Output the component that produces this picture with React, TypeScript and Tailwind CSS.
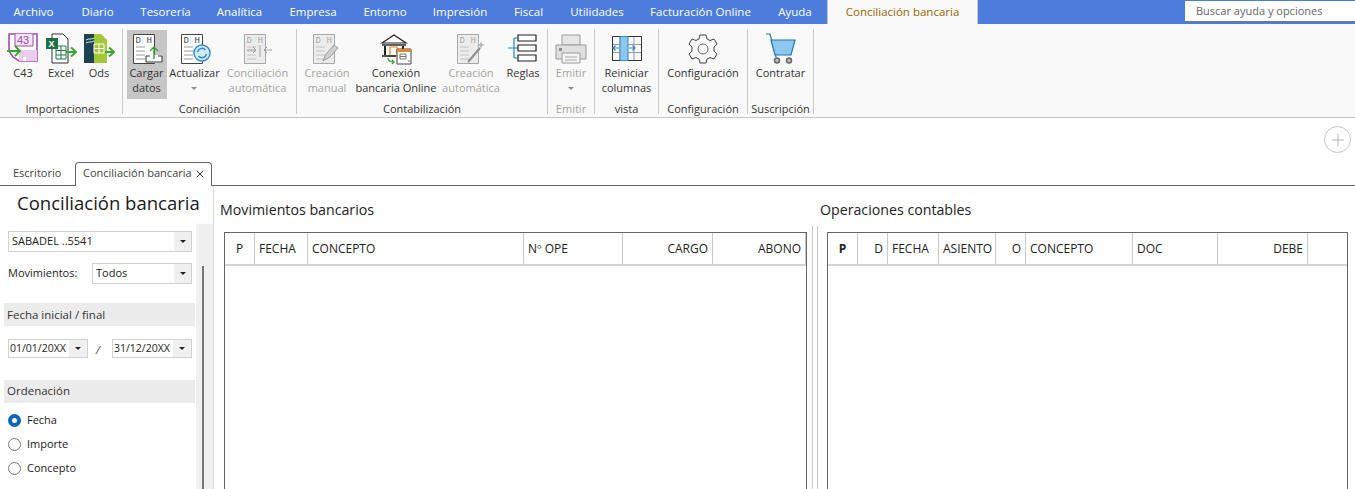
import type { ReactNode } from "react"
import { Plus, X } from "lucide-react"

const menu = [
  { label: "Archivo", w: "w-[67px]" },
  { label: "Diario", w: "w-[61px]" },
  { label: "Tesorería", w: "w-[75px]" },
  { label: "Analítica", w: "w-[73px]" },
  { label: "Empresa", w: "w-[74px]" },
  { label: "Entorno", w: "w-[70px]" },
  { label: "Impresión", w: "w-[80px]" },
  { label: "Fiscal", w: "w-[57px]" },
  { label: "Utilidades", w: "w-[80px]" },
  { label: "Facturación Online", w: "w-[127px]" },
  { label: "Ayuda", w: "w-[62px]" },
]

// Hoja con cabecera D H, la base de casi todos los iconos de la cinta
function Sheet({ dim, children }: { dim?: boolean; children?: ReactNode }) {
  const c = dim ? "#a8a8a8" : "#444"
  const l = dim ? "#c4c4c4" : "#999"
  return (
    <svg width="34" height="32" viewBox="0 0 34 32" fill="none">
      <path d="M3.5 1.5h21v29h-21z" fill={dim ? "#ececec" : "#fff"} stroke={c} />
      <text x="5.5" y="10" fontSize="9" fill={c} fontFamily="Liberation Mono">D</text>
      <text x="16.5" y="10" fontSize="9" fill={c} fontFamily="Liberation Mono">H</text>
      <path d="M6 14h9M6 18h9M6 22h9M6 26h9" stroke={l} />
      {children}
    </svg>
  )
}

const icons: Record<string, ReactNode> = {
  c43: (
    <svg width="32" height="32" viewBox="0 0 32 32" fill="none">
      <path d="M2 1h28v27H12l-6-4-4-6z" fill="#fff" stroke="#a24ea5" strokeWidth="1.6" />
      <path d="M8 1v12h18V1" fill="#f3e4f3" stroke="#a24ea5" />
      <text x="10" y="11" fontSize="11" fill="#a24ea5" fontFamily="Liberation Sans">43</text>
      <path d="M12 17h18v11H12z" fill="#e9cdea" />
      <path d="M16 24h3v4h-3z" fill="#fff" />
      <path d="M0 18h12M8 13l5 5-5 5" stroke="#3aa535" strokeWidth="2" />
    </svg>
  ),
  excel: (
    <svg width="32" height="32" viewBox="0 0 32 32" fill="none">
      <path d="M7 1h11l5 5v24H7z" fill="#fff" stroke="#333" />
      <path d="M11 13h10v13H11zM11 17.5h10M11 22h10M16 13v13" stroke="#1f7a45" />
      <path d="M1 5h12v11H1z" fill="#1d7044" />
      <text x="3.5" y="14" fontSize="9" fontWeight="700" fill="#fff" fontFamily="Liberation Sans">X</text>
      <path d="M21 19h9M26 14.5l5 4.5-5 4.5" stroke="#3aa535" strokeWidth="2" />
    </svg>
  ),
  ods: (
    <svg width="32" height="32" viewBox="0 0 32 32" fill="none">
      <path d="M1 1h12v29H1z" fill="#1d4350" />
      <path d="M11 1h7l6 6v23H11z" fill="#a4c639" />
      <path d="M11 11h10v9H11zM11 15.5h10M16 11v9" stroke="#fff" />
      <path d="M3 7c3-2 5 0 8-2M3 10c3-2 5 0 8-2" stroke="#cfe6ea" />
      <path d="M22 19h8M26 14.5l5 4.5-5 4.5" stroke="#3aa535" strokeWidth="2" />
    </svg>
  ),
  cargar: (
    <Sheet>
      <path d="M16 22h16v8H16z" fill="#fff" />
      <path d="M20 23h-4v6h16v-6h-4" stroke="#333" />
      <path d="M24 26V14M20 18l4-4 4 4" stroke="#35a035" strokeWidth="1.4" />
    </Sheet>
  ),
  actualizar: (
    <Sheet>
      <circle cx="24" cy="20" r="8" fill="#d5eaf8" stroke="#2b8ccb" strokeWidth="1.4" />
      <path d="M19.5 19a4.6 4.6 0 0 1 8-2M28.5 21a4.6 4.6 0 0 1-8 2" stroke="#2b8ccb" strokeWidth="1.5" />
    </Sheet>
  ),
  automatica: (
    <Sheet dim>
      <path d="M6 17h9l-3-3m3 3-3 3M19 12v12M31 17h-8l3-3m-3 3 3 3" stroke="#a0a0a0" />
    </Sheet>
  ),
  manual: (
    <Sheet dim>
      <path d="M13 28l3-7 8-9 4 3-8 9z" fill="#cfcfcf" stroke="#9c9c9c" />
    </Sheet>
  ),
  banco: (
    <svg width="32" height="32" viewBox="0 0 32 32" fill="none">
      <path d="M2 10 14 2l12 8z" fill="#fff" stroke="#222" strokeWidth="1.2" />
      <path d="M2 12h24" stroke="#222" strokeWidth="1.4" />
      <path d="M5 13v9M23 13v3" stroke="#222" strokeWidth="2" />
      <path d="M10 14h7v9h-7z" fill="#fff" stroke="#e08a2c" strokeWidth="1.2" />
      <path d="M2 23h14" stroke="#222" strokeWidth="1.6" />
      <path d="M17 16h14v15H17z" fill="#fff" stroke="#444" />
      <path d="M17 16h14v3H17z" fill="#e08a2c" />
      <path d="M20 21h6v5h-6zM20 23.5h6M28 28h2" stroke="#777" />
      <path d="M8 25c0 3 2 4 6 4m-2-2 2 2-2 2" stroke="#3aa535" strokeWidth="1.3" />
    </svg>
  ),
  creacion: (
    <Sheet dim>
      <path d="M14 29 26 15" stroke="#8f8f8f" strokeWidth="2.2" />
      <path d="M27 8l1 3 3 1-3 1-1 3-1-3-3-1 3-1z" fill="#b5b5b5" />
    </Sheet>
  ),
  reglas: (
    <svg width="32" height="32" viewBox="0 0 32 32" fill="none">
      <path d="M1 15h6M7 5v20M7 5h4M7 15h4M7 25h4" stroke="#1f86c9" strokeWidth="1.2" />
      <path d="M11 2h18v6H11zM11 12h18v6H11zM11 22h18v6H11z" fill="#fff" stroke="#222" strokeWidth="1.2" />
    </svg>
  ),
  emitir: (
    <svg width="32" height="32" viewBox="0 0 32 32" fill="none">
      <path d="M7 2h18v10H7z" fill="#e6e6e6" stroke="#9a9a9a" />
      <path d="M1 12h30v14H1z" fill="#e0e0e0" stroke="#9a9a9a" />
      <path d="M7 20h18v10H7z" fill="#f4f4f4" stroke="#9a9a9a" />
      <path d="M10 24h12M10 27h12" stroke="#a8a8a8" />
      <path d="M4 15h3v3H4z" fill="#8c8c8c" />
    </svg>
  ),
  reiniciar: (
    <svg width="32" height="32" viewBox="0 0 32 32" fill="none">
      <path d="M1.5 3.5h29v24h-29zM1.5 11.5h29M1.5 19.5h29M9 3v24M23 3v24" stroke="#999" />
      <path d="M1.5 3.5h29v24h-29z" stroke="#333" />
      <path d="M9 3.5h8v24H9z" fill="#8fc6ec" stroke="#2b8ccb" />
      <path d="M2 15h6M4.5 12.5 2 15l2.5 2.5M18 15h6M21.5 12.5 24 15l-2.5 2.5" stroke="#2b8ccb" strokeWidth="1.2" />
    </svg>
  ),
  config: (
    <svg width="32" height="32" viewBox="0 0 32 32" fill="none">
      <path
        d="M13 2h6l1 4 3 1.5 4-1.5 3 5-3 3v4l3 3-3 5-4-1.5-3 1.5-1 4h-6l-1-4-3-1.5-4 1.5-3-5 3-3v-4l-3-3 3-5 4 1.5 3-1.5z"
        stroke="#444"
      />
      <circle cx="16" cy="16" r="5" stroke="#666" />
    </svg>
  ),
  carrito: (
    <svg width="32" height="32" viewBox="0 0 32 32" fill="none">
      <path d="M1 1h4l6 23" stroke="#1f76b4" strokeWidth="1.2" />
      <path d="M6 7h24l-4 15H10z" fill="#8cc7ef" stroke="#1f76b4" strokeWidth="1.2" />
      <circle cx="12" cy="27.5" r="2.5" stroke="#666" strokeWidth="1.5" fill="#bbb" />
      <circle cx="24" cy="27.5" r="2.5" stroke="#666" strokeWidth="1.5" fill="#bbb" />
    </svg>
  ),
}

function RibbonBtn(props: {
  icon: string
  lines: string[]
  w: string
  dim?: boolean
  active?: boolean
  arrow?: boolean
}) {
  return (
    <div
      className={`${props.w} h-[69px] shrink-0 flex flex-col items-center pt-[3px] text-[11px] leading-[15px] whitespace-nowrap ${
        props.dim ? "text-[#a3a3a3]" : "text-[#333]"
      } ${props.active ? "bg-[#c6c6c6]" : ""}`}
    >
      <div className="h-[32px] flex items-center justify-center">{icons[props.icon]}</div>
      <div className="text-center">
        {props.lines.map((l) => (
          <div key={l}>{l}</div>
        ))}
        {props.arrow && <div className="mx-auto mt-[7px] w-0 h-0 border-x-[3px] border-t-[3px] border-x-transparent border-t-[#8a8a8a]" />}
      </div>
    </div>
  )
}

function Group(props: { title: string; w: string; dim?: boolean; inner?: string; children: ReactNode }) {
  return (
    <div className={`${props.w} shrink-0 h-[85px] border-r border-[#c9c9c9] flex flex-col`}>
      <div className={`flex h-[70px] pt-[1px] justify-center ${props.inner ?? ""}`}>{props.children}</div>
      <div className={`mt-auto -mb-[2px] text-center text-[11px] leading-[15px] ${props.dim ? "text-[#a3a3a3]" : "text-[#333]"}`}>
        {props.title}
      </div>
    </div>
  )
}

function Ribbon() {
  return (
    <div className="h-[94px] bg-[#f9f9f9] border-b border-[#c6c6c6] flex pt-[5px] pl-[3px]">
      <Group title="Importaciones" w="w-[120px]" inner="pr-[3px]">
        <RibbonBtn icon="c43" lines={["C43"]} w="w-[38px]" />
        <RibbonBtn icon="excel" lines={["Excel"]} w="w-[38px]" />
        <RibbonBtn icon="ods" lines={["Ods"]} w="w-[38px]" />
      </Group>
      <Group title="Conciliación" w="w-[174px]">
        <RibbonBtn icon="cargar" lines={["Cargar", "datos"]} w="w-[40px]" active />
        <RibbonBtn icon="actualizar" lines={["Actualizar"]} w="w-[56px]" arrow />
        <RibbonBtn icon="automatica" lines={["Conciliación", "automática"]} w="w-[70px]" dim />
      </Group>
      <Group title="Contabilización" w="w-[251px]">
        <RibbonBtn icon="manual" lines={["Creación", "manual"]} w="w-[52px]" dim />
        <RibbonBtn icon="banco" lines={["Conexión", "bancaria Online"]} w="w-[86px]" />
        <RibbonBtn icon="creacion" lines={["Creación", "automática"]} w="w-[64px]" dim />
        <RibbonBtn icon="reglas" lines={["Reglas"]} w="w-[40px]" />
      </Group>
      <Group title="Emitir" w="w-[47px]" dim>
        <RibbonBtn icon="emitir" lines={["Emitir"]} w="w-[40px]" dim arrow />
      </Group>
      <Group title="vista" w="w-[64px]">
        <RibbonBtn icon="reiniciar" lines={["Reiniciar", "columnas"]} w="w-[56px]" />
      </Group>
      <Group title="Configuración" w="w-[89px]">
        <RibbonBtn icon="config" lines={["Configuración"]} w="w-[84px]" />
      </Group>
      <Group title="Suscripción" w="w-[66px]">
        <RibbonBtn icon="carrito" lines={["Contratar"]} w="w-[60px]" />
      </Group>
    </div>
  )
}

function Caret() {
  return <span className="w-0 h-0 border-x-[3px] border-t-[3px] border-x-transparent border-t-[#222]" />
}

function Select(props: { label: string; w: string; h?: string; text?: string; pad?: string; arrow: string }) {
  return (
    <div className={`${props.w} ${props.h ?? "h-[21px]"} border border-[#d2d2d2] bg-white flex items-center text-[#222] ${props.text ?? "text-[11px]"}`}>
      <span className={`flex-1 whitespace-nowrap ${props.pad ?? "pl-[3px]"}`}>{props.label}</span>
      <span className={`${props.arrow} h-full bg-[#f0f0f0] flex items-center justify-center`}>
        <Caret />
      </span>
    </div>
  )
}

function Section({ children }: { children: ReactNode }) {
  return <div className="h-[23px] bg-[#ececec] pl-[3px] flex items-center text-[11.5px] text-[#333]">{children}</div>
}

function Radio({ label, on }: { label: string; on?: boolean }) {
  return (
    <div className="h-[24px] flex items-center gap-[6px] pl-[4px] text-[11px] text-[#222]">
      {on ? (
        <span className="w-[13px] h-[13px] rounded-full bg-[#0a66b8] flex items-center justify-center">
          <span className="w-[5px] h-[5px] rounded-full bg-white" />
        </span>
      ) : (
        <span className="w-[13px] h-[13px] rounded-full border border-[#777] bg-white" />
      )}
      {label}
    </div>
  )
}

function Sidebar() {
  return (
    <div className="w-[214px] shrink-0 flex border-r border-[#dcdcdc]">
      <div className="w-[191px] ml-[4px] shrink-0">
        <div className="h-[45px] flex items-center pl-[13px] text-[18.5px] text-[#1a1a1a] whitespace-nowrap pb-[11px]">
          Conciliación bancaria
        </div>
        <div className="pl-[4px] w-[188px]">
          <Select label="SABADEL ..5541" w="w-[184px]" arrow="w-[17px]" />
          <div className="mt-[11px] flex items-center">
            <span className="w-[84px] text-[11px] text-[#222]">Movimientos:</span>
            <Select label="Todos" w="w-[100px]" arrow="w-[17px]" />
          </div>
        </div>
        <div className="mt-[19px]">
          <Section>Fecha inicial / final</Section>
        </div>
        <div className="mt-[13px] pl-[4px] flex items-center">
          <Select label="01/01/20XX" w="w-[80px]" h="h-[19px]" text="text-[10.5px]" pad="pl-[1px]" arrow="w-[18px]" />
          <span className="w-[24px] text-center text-[11px] italic text-[#444] pt-[3px] pr-[4px]">/</span>
          <Select label="31/12/20XX" w="w-[80px]" h="h-[19px]" text="text-[10.5px]" pad="pl-[1px]" arrow="w-[18px]" />
        </div>
        <div className="mt-[21px]">
          <Section>Ordenación</Section>
        </div>
        <div className="mt-[6px]">
          <Radio label="Fecha" on />
          <Radio label="Importe" />
          <Radio label="Concepto" />
        </div>
      </div>
      <div className="ml-[1px] flex-1 mt-[38px] bg-[#f0f0f0] flex justify-center">
        <div className="mt-[42px] w-[2px] ml-[-3px] h-full bg-[#777]" />
      </div>
    </div>
  )
}

function Cell(props: { w: string; label?: string; right?: boolean; center?: boolean; bold?: boolean }) {
  return (
    <div
      className={`${props.w} shrink-0 h-full border-r border-[#c8c8c8] flex items-center px-[4px] text-[12px] text-[#222] whitespace-nowrap ${
        props.right ? "justify-end" : props.center ? "justify-center" : ""
      } ${props.bold ? "font-bold" : ""}`}
    >
      {props.label}
    </div>
  )
}

function Panel(props: { title: string; titleClass: string; tableClass: string; children: ReactNode }) {
  return (
    <div className="min-w-0">
      <div className={`h-[46px] flex items-center pt-[2px] text-[14.2px] text-[#222] whitespace-nowrap ${props.titleClass}`}>
        {props.title}
      </div>
      <div className={`h-[300px] border-x border-t border-[#666] ${props.tableClass}`}>
        <div className="h-[33px] flex border-b-2 border-[#d4d4d4]">{props.children}</div>
      </div>
    </div>
  )
}

export default function App() {
  return (
    <div className="w-[1355px] h-[489px] overflow-hidden bg-white font-['Open_Sans','Noto_Sans',sans-serif]">
      <div className="h-[24px] bg-[#4d7cdc] flex text-[11.5px] text-white">
        <div className="flex">
          {menu.map((m) => (
            <div key={m.label} className={`${m.w} h-full flex items-center justify-center whitespace-nowrap`}>
              {m.label}
            </div>
          ))}
        </div>
        <div className="w-[151px] ml-[1px] bg-[#f9f9f9] border-x border-[#c6c6c6] flex items-center justify-center text-[#9a6400] shrink-0">
          Conciliación bancaria
        </div>
        <div className="ml-auto w-[170px] mt-[1px] h-[21px] bg-white border-b border-[#777] pl-[11px] flex items-center text-[#666] text-[11px]">
          Buscar ayuda y opciones
        </div>
      </div>
      <Ribbon />
      <div className="h-[68px] border-b border-[#666] flex relative">
        <div className="absolute right-[4px] top-[8px] w-[27px] h-[27px] rounded-full border border-[#c4c4c4] flex items-center justify-center">
          <Plus size={20} strokeWidth={1} className="text-[#a8a8a8]" />
        </div>
        <div className="mt-auto flex items-end pl-[13px] text-[11px] text-[#444] translate-y-[1px]">
          <div className="h-[24px] w-[62px] flex items-center pb-[2px]">Escritorio</div>
          <div className="h-[24px] w-[137px] bg-white border border-b-0 border-[#666] rounded-t-[4px] flex items-center pl-[7px] pb-[2px] gap-[2px] whitespace-nowrap">
            Conciliación bancaria
            <X size={12} strokeWidth={1.8} className="text-[#222]" />
          </div>
        </div>
      </div>
      <div className="flex">
        <Sidebar />
        <div className="w-[598px] shrink-0 pl-[10px] pr-[6px]">
          <Panel title="Movimientos bancarios" titleClass="-ml-[4px]" tableClass="w-[583px]">
            <Cell w="w-[30px]" label="P" center />
            <Cell w="w-[53px]" label="FECHA" />
            <Cell w="w-[216px]" label="CONCEPTO" />
            <Cell w="w-[99px]" label="Nº OPE" />
            <Cell w="w-[90px]" label="CARGO" right />
            <Cell w="w-[93px]" label="ABONO" right />
          </Panel>
        </div>
        <div className="w-[6px] shrink-0 mt-[40px] border-x border-[#c8c8c8]" />
        <div className="flex-1 pl-[9px]">
          <Panel title="Operaciones contables" titleClass="-ml-[7px]" tableClass="w-[521px]">
            <Cell w="w-[30px]" label="P" center bold />
            <Cell w="w-[30px]" label="D" right />
            <Cell w="w-[51px]" label="FECHA" />
            <Cell w="w-[57px]" label="ASIENTO" />
            <Cell w="w-[30px]" label="O" right />
            <Cell w="w-[107px]" label="CONCEPTO" />
            <Cell w="w-[85px]" label="DOC" />
            <Cell w="w-[90px]" label="DEBE" right />
          </Panel>
        </div>
      </div>
    </div>
  )
}
